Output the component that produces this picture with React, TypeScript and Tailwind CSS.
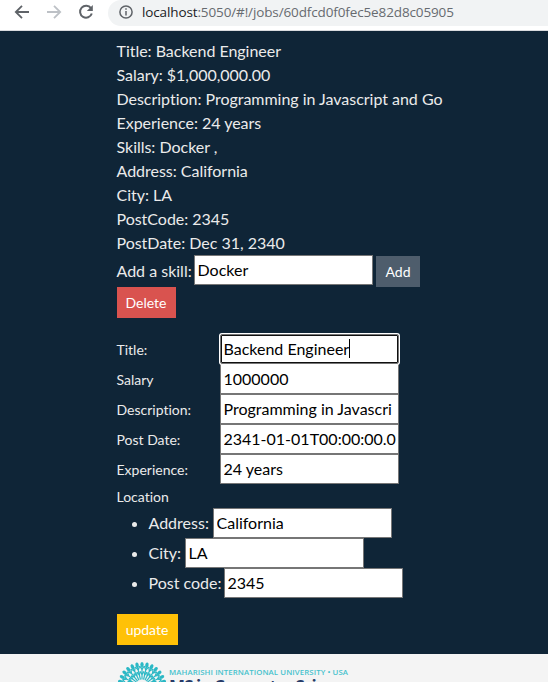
import React from 'react';

const details = [
  'Title: Backend Engineer',
  'Salary: $1,000,000.00',
  'Description: Programming in Javascript and Go',
  'Experience: 24 years',
  'Skills: Docker ,',
  'Address: California',
  'City: LA',
  'PostCode: 2345',
  'PostDate: Dec 31, 2340',
];

const fields = [
  { label: 'Title:', value: 'Backend Engineer', focused: true },
  { label: 'Salary', value: '1000000' },
  { label: 'Description:', value: 'Programming in Javascri' },
  { label: 'Post Date:', value: '2341-01-01T00:00:00.0' },
  { label: 'Experience:', value: '24 years' },
];

const places = [
  { label: 'Address:', value: 'California', width: 'w-[64.5px]' },
  { label: 'City:', value: 'LA', width: 'w-[36.5px]' },
  { label: 'Post code:', value: '2345', width: 'w-[75.5px]' },
];

function Field({ value, focused = false, raised = false }: { value: string; focused?: boolean; raised?: boolean }) {
  return (
    <span className="relative block h-[30px] w-[179px] shrink-0">
      <input
        defaultValue={value}
        className={
          'block h-[30px] w-[179px] border border-[#767676] bg-white pl-[2.5px] pr-[2px] pt-0 text-[16px] text-black outline-none' +
          (raised ? ' pb-[2px]' : ' pb-0') +
          (focused ? ' relative z-10 rounded-[2px] border-[#101010] shadow-[inset_0_0_0_1px_#101010,0_0_0_1px_#ffffff]' : '')
        }
      />
      {focused && <span className="absolute left-[129px] top-[5px] z-20 h-[19px] w-px bg-black" />}
    </span>
  );
}

function Browser() {
  return (
    <div className="flex h-[31px] items-start border-b border-[#d9dbde] bg-white">
      <svg width="108" height="26" viewBox="0 0 108 26" fill="none" strokeWidth="1.8" className="shrink-0">
        <path d="M29 12H16.5M22 5.8L15.8 12L22 18.2" stroke="#5f6368" />
        <path d="M47 12H59.5M54 5.8L60.2 12L54 18.2" stroke="#bdc1c6" />
        <path d="M91 8.2A6 6 0 1 0 91.8 13.5" stroke="#5f6368" strokeWidth="2" />
        <path d="M92.8 5V11H86.8Z" fill="#5f6368" />
      </svg>
      <div className="flex h-[26px] flex-1 items-start rounded-l-full bg-[#f1f3f4] pl-[11px]">
        <svg width="15" height="24" viewBox="0 0 15 24" fill="none" stroke="#5f6368" strokeWidth="1.5" className="shrink-0">
          <circle cx="7" cy="12" r="6.1" />
          <path d="M7 11V15.5M7 8.2V9.8" />
        </svg>
        <span className="ml-[8px] whitespace-nowrap font-['Open_Sans',sans-serif] text-[13.5px] leading-[25px] tracking-[-0.125px] text-[#676b70]">
          <span className="text-[#202124]">localhost</span>:5050/#!/jobs/60dfcd0f0fec5e82d8c05905
        </span>
      </div>
    </div>
  );
}

const rays = Array.from({ length: 28 }, (_, i) => (i * 360) / 28);

function Footer() {
  return (
    <div className="h-[28px] overflow-hidden bg-[#f4f4f4] pl-[117px]">
      <svg width="260" height="28" viewBox="0 0 260 28">
        <g transform="translate(25 32.5)" stroke="#2bb8c5" fill="#2bb8c5">
          {rays.map((angle) => (
            <g key={angle} transform={`rotate(${angle})`}>
              <path d="M0 -7V-22" strokeWidth="1.2" />
              <path d="M0 -17L-2.3 -20.5M0 -17L2.3 -20.5M0 -12L-1.7 -15M0 -12L1.7 -15" strokeWidth="1.2" />
              <ellipse cx="0" cy="-22" rx="1.7" ry="2.6" stroke="none" />
            </g>
          ))}
        </g>
        <text x="52" y="20.5" textLength="179" fontSize="7.8" fontWeight="600" fill="#46c2cd" fontFamily="Open Sans, sans-serif">
          MAHARISHI INTERNATIONAL UNIVERSITY • USA
        </text>
        <text x="52" y="38.5" textLength="184" fontSize="17" fontWeight="700" fill="#263b68" fontFamily="Open Sans, sans-serif">
          MS in Computer Science
        </text>
      </svg>
    </div>
  );
}

export default function App() {
  return (
    <div className="h-[682px] w-[548px] overflow-hidden bg-[#0f2537] font-[Lato,sans-serif] text-[16px] text-[#ebebeb] [font-variant-ligatures:none]">
      <Browser />
      <main className="h-[623px] pl-[116.5px] pt-[8px]">
        {details.map((line) => (
          <div key={line} className="h-6 leading-6 tracking-[-0.02px]">{line}</div>
        ))}
        <div className="flex h-[32px] items-start">
          <span className="w-[77.5px] whitespace-nowrap leading-[31px]">Add a skill:</span>
          <Field value="Docker" raised />
          <button className="ml-[3px] mt-px h-[31px] w-[44px] bg-[#4e5d6c] text-[14px] text-white">Add</button>
        </div>
        <button className="ml-[0.5px] block h-[31px] w-[59px] bg-[#d9534f] pr-px text-[14px] text-white">Delete</button>
        <form className="mt-[16px]">
          {fields.map((field) => (
            <label key={field.label} className="flex h-[30px] text-[14px]">
              <span className="w-[103.5px] leading-[32px]">{field.label}</span>
              <Field value={field.value} focused={field.focused} raised />
            </label>
          ))}
          <div className="h-[24px] pt-[2px] text-[14px] leading-[22px]">Location</div>
          <ul className="list-disc pl-[32px]">
            {places.map((place) => (
              <li key={place.label} className="h-[30px] leading-[30px]">
                <div className="flex">
                  <span className={`shrink-0 whitespace-nowrap ${place.width}`}>{place.label}</span>
                  <Field value={place.value} />
                </div>
              </li>
            ))}
          </ul>
          <button type="button" className="ml-[0.5px] mt-[16px] block h-[31px] w-[61px] bg-[#ffc107] pr-px text-[14px] text-white">update</button>
        </form>
      </main>
      <Footer />
    </div>
  );
}
